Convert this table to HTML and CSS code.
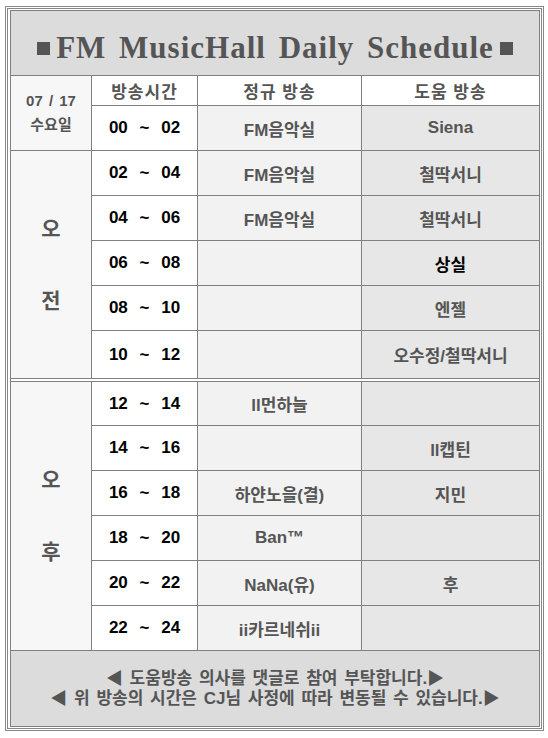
FILE: index.html
```html
<!DOCTYPE html>
<html lang="ko">
<head>
<meta charset="utf-8">
<title>FM MusicHall Daily Schedule</title>
<link rel="stylesheet" href="styles.css">
</head>
<body>
<div class="frame">
  <div class="sheet">
    <div class="title"><span class="sq"></span><span class="title-text">FM MusicHall Daily Schedule</span><span class="sq"></span></div>

    <div class="section sec-top">
      <div class="side date"><div class="md">07 / 17</div><div class="dow">수요일</div></div>
      <div class="rows">
        <div class="row head"><div class="c time">방송시간</div><div class="c reg">정규 방송</div><div class="c help">도움 방송</div></div>
        <div class="row"><div class="c time">00 ~ 02</div><div class="c reg">FM음악실</div><div class="c help">Siena</div></div>
      </div>
    </div>

    <div class="section am">
      <div class="side"><div class="big">오<br><br>전</div></div>
      <div class="rows">
        <div class="row"><div class="c time">02 ~ 04</div><div class="c reg">FM음악실</div><div class="c help">철딱서니</div></div>
        <div class="row"><div class="c time">04 ~ 06</div><div class="c reg">FM음악실</div><div class="c help">철딱서니</div></div>
        <div class="row"><div class="c time">06 ~ 08</div><div class="c reg"></div><div class="c help dark">상실</div></div>
        <div class="row"><div class="c time">08 ~ 10</div><div class="c reg"></div><div class="c help">엔젤</div></div>
        <div class="row"><div class="c time">10 ~ 12</div><div class="c reg"></div><div class="c help">오수정/철딱서니</div></div>
      </div>
    </div>

    <div class="section pm">
      <div class="side"><div class="big">오<br><br>후</div></div>
      <div class="rows">
        <div class="row"><div class="c time">12 ~ 14</div><div class="c reg">ll먼하늘</div><div class="c help"></div></div>
        <div class="row"><div class="c time">14 ~ 16</div><div class="c reg"></div><div class="c help">ll캡틴</div></div>
        <div class="row"><div class="c time">16 ~ 18</div><div class="c reg">하얀노을(결)</div><div class="c help">지민</div></div>
        <div class="row"><div class="c time">18 ~ 20</div><div class="c reg">Ban™</div><div class="c help"></div></div>
        <div class="row"><div class="c time">20 ~ 22</div><div class="c reg">NaNa(유)</div><div class="c help">후</div></div>
        <div class="row"><div class="c time">22 ~ 24</div><div class="c reg">ii카르네쉬ii</div><div class="c help"></div></div>
      </div>
    </div>

    <div class="foot">
      <div>◀ 도움방송 의사를 댓글로 참여 부탁합니다.▶</div>
      <div>◀ 위 방송의 시간은 CJ님 사정에 따라 변동될 수 있습니다.▶</div>
    </div>
  </div>
</div>
</body>
</html>
```

FILE: styles.css
```css
* { box-sizing: border-box; }
html, body { margin: 0; padding: 0; background: #fff; }
body {
  font-family: "Liberation Sans", "Noto Sans CJK KR", sans-serif;
  font-weight: bold;
  color: #555;
}
.frame {
  margin: 6px 0 0 5px;
  width: 539px;
  height: 725px;
  border: 3px double #888;
  padding: 1px 1px 1px 2px;
}
.sheet {
  height: 100%;
  border: 1px solid #808080;
  display: flex;
  flex-direction: column;
}
.title {
  height: 65px;
  flex: none;
  padding-top: 10px;
  background: #dcdcdc;
  border-bottom: 1px solid #808080;
  display: flex;
  align-items: center;
  justify-content: center;
  gap: 6px;
}
.title-text {
  font-family: "Liberation Serif", "Noto Sans CJK KR", serif;
  font-size: 31px;
  line-height: 34px;
  letter-spacing: 1px;
  word-spacing: 4px;
  color: #555;
}
.sq {
  width: 13px;
  height: 13px;
  background: #555;
  flex: none;
}
.section {
  display: flex;
  flex: none;
  border-bottom: 1px solid #808080;
}
.section.am { border-bottom: 4px double #808080; }
.side {
  width: 81px;
  flex: none;
  border-right: 1px solid #808080;
  background: #f7f7f7;
  display: flex;
  flex-direction: column;
  align-items: center;
  justify-content: center;
  text-align: center;
}
.date .md { font-size: 15px; line-height: 24px; word-spacing: 2px; }
.date .dow { font-size: 15px; line-height: 24px; }
.big { font-size: 21px; line-height: 36px; }
.rows {
  flex: 1;
  display: flex;
  flex-direction: column;
}
.row {
  display: flex;
  height: 45px;
  border-top: 1px solid #808080;
}
.row:first-child { border-top: 0; height: 44px; }
.sec-top .row.head { height: 29px; }
.sec-top .row + .row { height: 45px; }
.am .row:last-child { height: 48px; }
.pm .row:first-child { height: 43px; }
.c {
  display: flex;
  align-items: center;
  justify-content: center;
  font-size: 17px;
  white-space: nowrap;
}
.time {
  width: 106px;
  border-right: 1px solid #808080;
  background: #fff;
  color: #000;
  font-size: 17px;
  word-spacing: 7px;
}
.reg {
  width: 164px;
  border-right: 1px solid #808080;
  background: #f2f2f2;
}
.help {
  flex: 1;
  background: #e7e7e7;
}
.help.dark { color: #000; }
.head .c {
  background: #fff;
  color: #555;
  font-size: 17px;
  word-spacing: 0;
  letter-spacing: 1px;
}
.foot {
  flex: 1;
  background: #dcdcdc;
  display: flex;
  flex-direction: column;
  align-items: center;
  justify-content: center;
  font-size: 17px;
  line-height: 20px;
  word-spacing: 2px;
  white-space: nowrap;
}
```
